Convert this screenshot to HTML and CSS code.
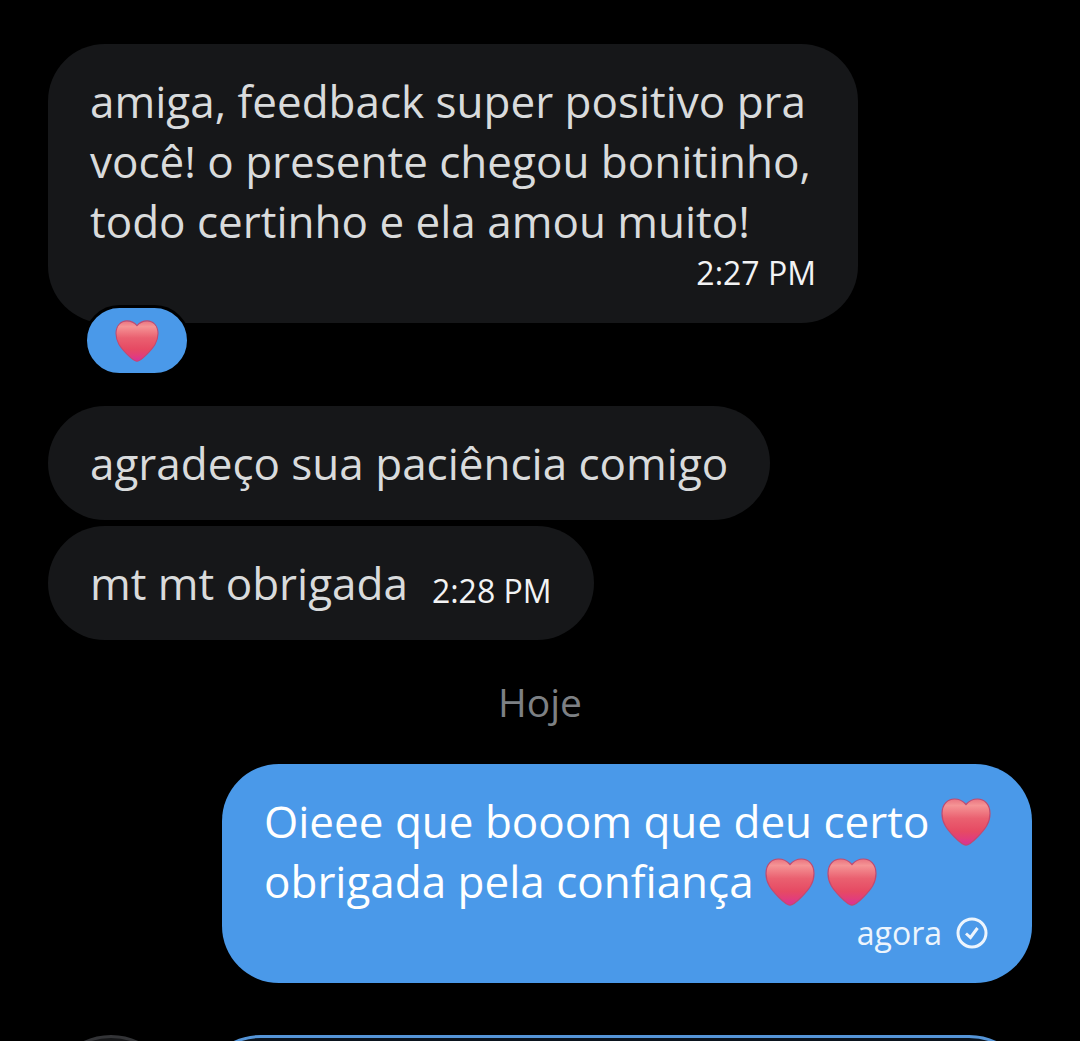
FILE: index.html
```html
<!DOCTYPE html>
<html lang="pt-BR">

<head>
  <meta charset="UTF-8">
  <meta name="viewport" content="width=device-width, initial-scale=1.0">
  <title>Mensagens</title>
  <link rel="stylesheet" href="styles.css">
</head>

<body>
  <svg class="defs" width="0" height="0" aria-hidden="true">
    <defs>
      <linearGradient id="heart-fill" x1="0" y1="0" x2="0" y2="1">
        <stop offset="0" stop-color="#e9737f" />
        <stop offset="0.14" stop-color="#f59495" />
        <stop offset="0.42" stop-color="#ea6070" />
        <stop offset="0.7" stop-color="#e64a63" />
        <stop offset="0.85" stop-color="#e23f78" />
        <stop offset="1" stop-color="#d9309a" />
      </linearGradient>
      <symbol id="heart" viewBox="0 0 50 48">
        <path d="M25 47.200C22.500 47.200 18.500 44 13.500 39C6 31.500 1 25 1 15.500C1 6.500 6.500 1 13.500 1C18.500 1 22.500 3.500 25 6.500C27.500 3.500 31.500 1 36.500 1C43.500 1 49 6.500 49 15.500C49 25 44 31.500 36.500 39C31.500 44 27.500 47.200 25 47.200Z" fill="url(#heart-fill)" stroke="#c04a70" stroke-width="1.200" />
      </symbol>
    </defs>
  </svg>
  <div class="app-wrap">
    <main class="chat">
      <div class="message has-reaction">
        <p>amiga, feedback super positivo pra você! o presente chegou bonitinho, todo certinho e ela amou muito!</p>
        <div class="meta"><time>2:27 PM</time></div>
        <button class="reaction" type="button" aria-label="coração">
          <svg class="heart"><use href="#heart" /></svg>
        </button>
      </div>
      <div class="message">
        <p>agradeço sua paciência comigo</p>
      </div>
      <div class="message inline">
        <p>mt mt obrigada</p>
        <time>2:28 PM</time>
      </div>
      <div class="day">Hoje</div>
      <div class="message sent">
        <p>Oieee que booom que deu certo <svg class="heart"><use href="#heart" /></svg> obrigada pela confiança <svg class="heart"><use href="#heart" /></svg> <svg class="heart"><use href="#heart" /></svg></p>
        <div class="meta">
          <span>agora</span>
          <svg class="check" viewBox="0 0 32 32">
            <circle cx="16" cy="16" r="14" />
            <path d="M10 16.500L14.500 20.500L21.500 11" />
          </svg>
        </div>
      </div>
    </main>
    <footer class="composer">
      <button class="add" type="button" aria-label="Anexar"></button>
      <input class="message-box" type="text" autocomplete="off" aria-label="Mensagem" />
    </footer>
  </div>
</body>

</html>
```

FILE: styles.css
```css
* {
  margin: 0;
  padding: 0;
  box-sizing: border-box;
}

body {
  font-family: "Open Sans", "Noto Sans", sans-serif;
  background-color: #000;
  color: #d9dbdc;
}

.defs {
  position: absolute;
}

.app-wrap {
  display: flex;
  flex-direction: column;
  height: 100vh;
  padding: 44px 48px 0;
  overflow: hidden;
}

.chat {
  display: flex;
  flex-direction: column;
  align-items: flex-start;
  flex-shrink: 0;
  gap: 6px;
}

.message {
  position: relative;
  max-width: 810px;
  padding: 27px 42px;
  border-radius: 57px;
  background-color: #161719;
  font-size: 44px;
  line-height: 60px;
}

.message time,
.meta {
  color: #f2f3f4;
  font-size: 32px;
  line-height: 44px;
}

.meta {
  display: flex;
  justify-content: flex-end;
  align-items: center;
  gap: 14px;
}

.has-reaction {
  padding-bottom: 28px;
  margin-bottom: 77px;
}

.reaction {
  position: absolute;
  left: 36px;
  bottom: -53px;
  display: flex;
  justify-content: center;
  align-items: center;
  width: 106px;
  height: 71px;
  border: 3px solid #000;
  border-radius: 36px;
  background-color: #4a99e9;
}

.heart {
  width: 50px;
  height: 48px;
  vertical-align: -8px;
}

.reaction .heart {
  width: 44px;
  height: 42px;
}

.inline {
  display: flex;
  align-items: flex-end;
  gap: 24px;
}

.day {
  align-self: center;
  margin: 27px 0 28px;
  color: #7d8084;
  font-size: 39px;
  line-height: 57px;
}

.sent {
  align-self: flex-end;
  padding: 27px 32px 28px 42px;
  background-color: #4a99e9;
  color: #fff;
}

.sent .meta {
  padding-right: 12px;
  color: #edf5fd;
}

.check {
  width: 32px;
  height: 32px;
  fill: none;
  stroke: #edf5fd;
  stroke-width: 3;
}

.composer {
  display: flex;
  flex-shrink: 0;
  gap: 24px;
  margin-top: 52px;
}

.add {
  width: 126px;
  height: 126px;
  border: 3px solid #333437;
  border-radius: 50%;
  background-color: #161719;
}

.message-box {
  flex: 1;
  padding: 0 42px;
  border: 3px solid #5595d8;
  border-radius: 63px;
  outline: none;
  background-color: #0a131d;
  color: #fff;
  font: inherit;
  font-size: 44px;
}
```
